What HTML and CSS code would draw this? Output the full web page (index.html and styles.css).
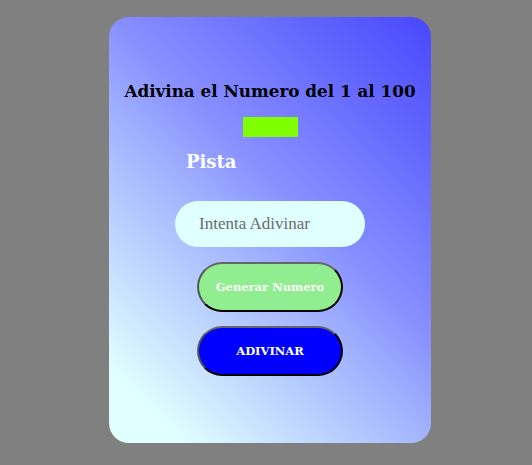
FILE: index.html
```html
<!DOCTYPE html>
<html>
<head>
<meta charset="utf-8">
<link rel="stylesheet" href="styles.css">
</head>
<body>
<div class="card">
  <h2 class="title">Adivina el Numero del 1 al 100</h2>
  <div class="box"></div>
  <div class="hint">Pista</div>
  <input class="guess" type="text" placeholder="Intenta Adivinar">
  <button class="btn gen">Generar Numero</button>
  <button class="btn go">ADIVINAR</button>
</div>
</body>
</html>
```
FILE: styles.css
```css
html, body { margin: 0; padding: 0; }
body {
  background: #808080;
  width: 532px;
  height: 465px;
  font-family: "DejaVu Serif", "Liberation Serif", serif;
}
.card {
  margin: 17px 0 0 109px;
  width: 322px;
  height: 426px;
  border-radius: 20px;
  background: linear-gradient(45deg, #e0ffff 10%, #a0b0ff 45%, #8890ff 57%, #4848ff 100%);
  display: flex;
  flex-direction: column;
  align-items: center;
  box-sizing: border-box;
  padding-top: 64px;
}
.title {
  margin: 0;
  font-size: 16.8px;
  font-weight: bold;
  color: #000;
  line-height: 20px;
  letter-spacing: 0;
}
.box {
  margin-top: 16px;
  width: 55px;
  height: 20px;
  background: #7fff00;
}
.hint {
  align-self: flex-start;
  margin: 13px 0 0 77px;
  color: #fff;
  font-weight: bold;
  font-size: 18px;
  line-height: 24px;
}
.guess {
  margin-top: 27px;
  width: 190px;
  height: 46px;
  box-sizing: border-box;
  border: none;
  outline: none;
  border-radius: 23px;
  background: #e0ffff;
  padding: 0 0 0 24px;
  font-family: "Liberation Serif", serif;
  font-size: 17px;
  color: #333;
}
.guess::placeholder { color: #6b6b6b; }
.btn {
  width: 146px;
  height: 50px;
  border-radius: 25px;
  border: 2px outset #555;
  border-color: #666 #222 #000 #555;
  color: #fff;
  font-family: "DejaVu Serif", "Liberation Serif", serif;
  font-weight: bold;
  font-size: 11.5px;
  padding: 0;
}
.gen { margin-top: 15px; background: #90ee90; }
.go { margin-top: 14px; background: #0000ff; }
```
